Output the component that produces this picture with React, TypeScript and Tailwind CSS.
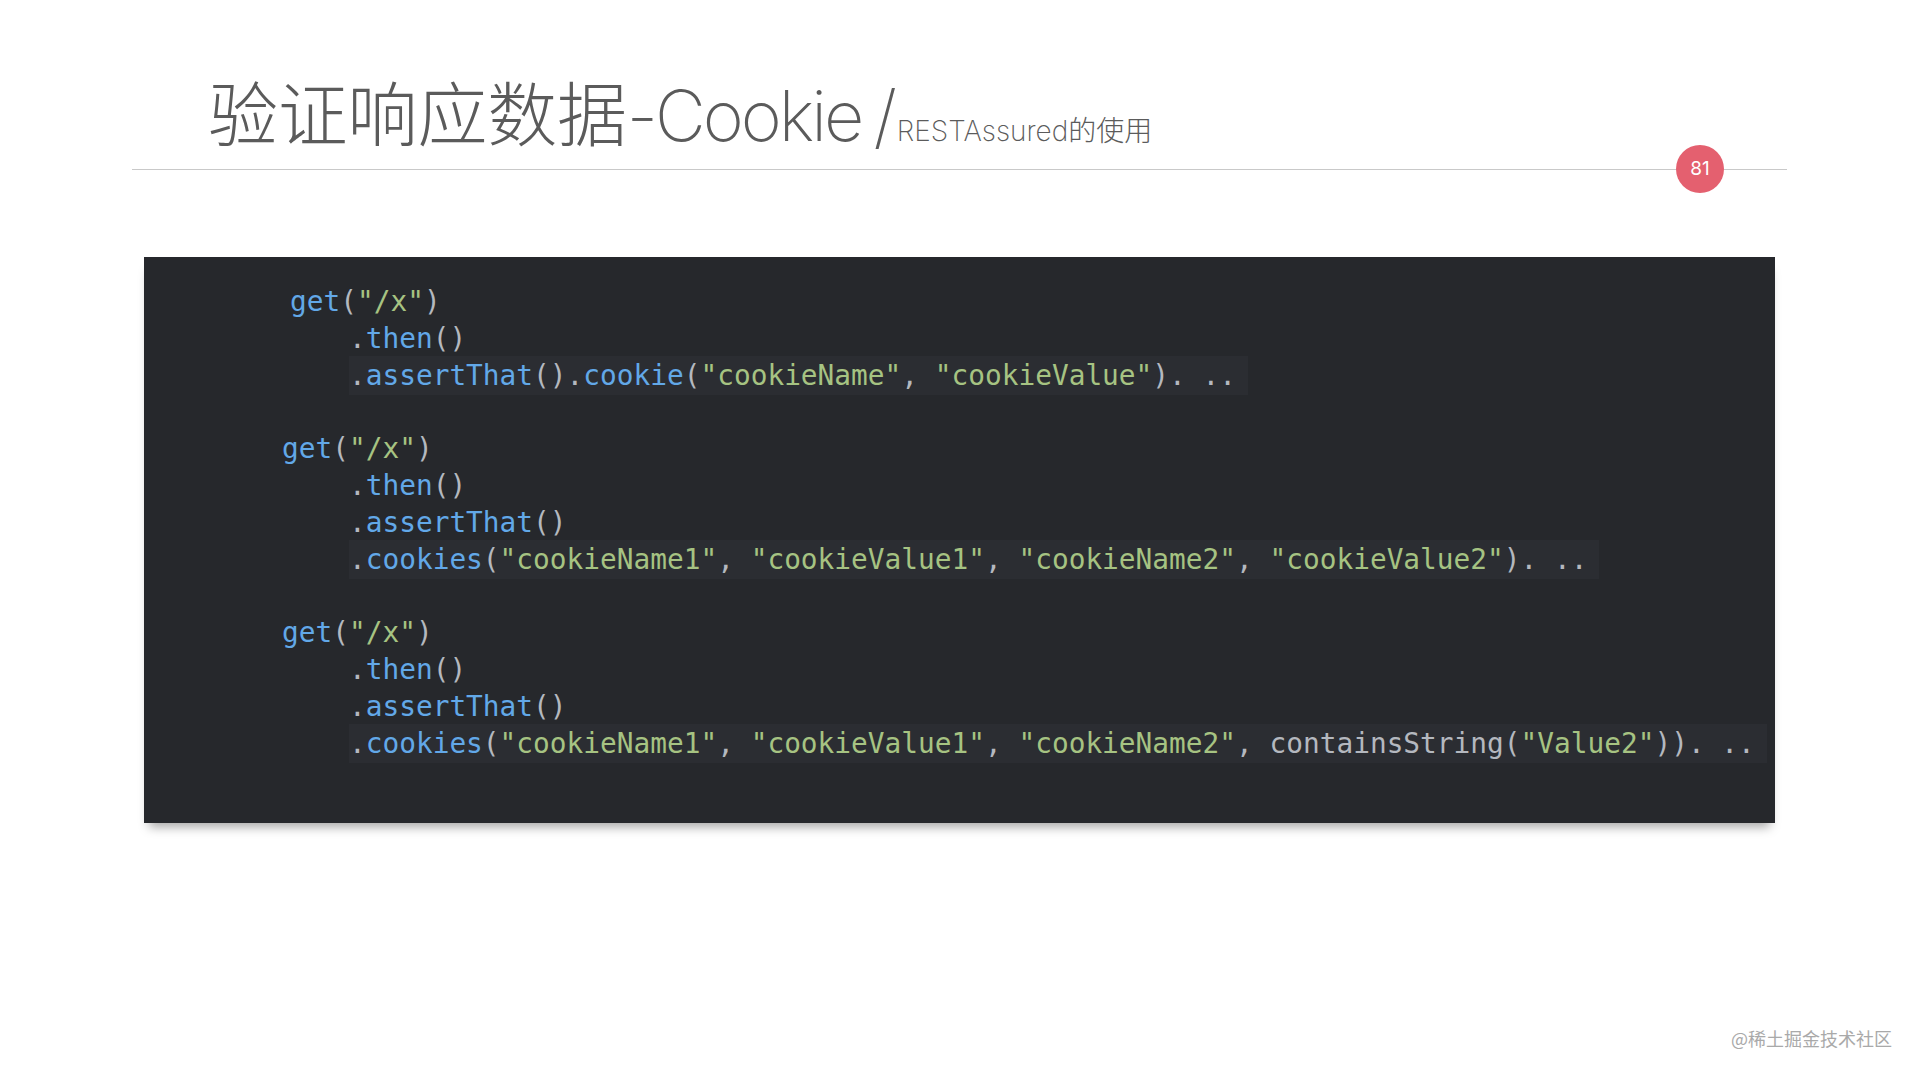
import React from 'react';

const BLUE = new Set(['get', 'then', 'assertThat', 'cookie', 'cookies']);

const lines: string[] = [
  'get("/x")',
  '    .then()',
  '    .assertThat().cookie("cookieName", "cookieValue"). ..',
  '',
  'get("/x")',
  '    .then()',
  '    .assertThat()',
  '    .cookies("cookieName1", "cookieValue1", "cookieName2", "cookieValue2"). ..',
  '',
  'get("/x")',
  '    .then()',
  '    .assertThat()',
  '    .cookies("cookieName1", "cookieValue1", "cookieName2", containsString("Value2")). ..',
];

// lines that sit on a slightly lighter band in the screenshot
const banded = new Set([2, 7, 12]);

function Tokens({ text }: { text: string }) {
  const parts = text.match(/"[^"]*"|[A-Za-z]+|[^"A-Za-z]+/g) || [];
  return (
    <>
      {parts.map((p, i) => {
        let cls = 'text-[#b4b8bf]';
        if (p.startsWith('"')) cls = 'text-[#a6c382]';
        else if (BLUE.has(p)) cls = 'text-[#62a8e8]';
        return (
          <span key={i} className={cls}>
            {p}
          </span>
        );
      })}
    </>
  );
}

function CodeLine({ text, index }: { text: string; index: number }) {
  const indent = text.match(/^ */)?.[0] ?? '';
  const body = text.slice(indent.length);
  return (
    <div className={index === 0 ? 'h-[36.8px] pl-2' : 'h-[36.8px]'}>
      {indent}
      {body && (
        <span className={banded.has(index) ? 'bg-[#2b2d32] pr-3 py-[3px]' : ''}>
          <Tokens text={body} />
        </span>
      )}
    </div>
  );
}

export default function App() {
  return (
    <div className="relative w-full h-[1080px] bg-white overflow-hidden">
      <header className="h-[169px] pl-[208px] pt-[81px] flex items-baseline text-[#5b5b5b] font-['Inter','Noto_Sans_CJK_SC',sans-serif] font-extralight">
        <span className="text-[70px] leading-[70px] tracking-[-0.2px]">验证响应数据</span>
        <span className="text-[70px] leading-[70px] tracking-[-3px]">-Cookie</span>
        <span className="text-[70px] leading-[70px] ml-[12px]">/</span>
        <span className="text-[28px] leading-none">RESTAssured的使用</span>
      </header>

      <div className="relative ml-[132px] w-[1655px] h-px bg-[#c9c9c9]">
        <div className="absolute left-[1544px] -top-[24px] w-[48px] h-[48px] rounded-full bg-[#e4606f] flex items-center justify-center text-white text-[19px] font-['Inter',sans-serif]">
          81
        </div>
      </div>

      <section className="ml-[144px] mt-[87px] w-[1631px] h-[566px] bg-[#26282c] shadow-[0_9px_10px_-5px_rgba(0,0,0,0.35)] pt-[27px] pl-[138px] whitespace-pre font-['DejaVu_Sans_Mono',monospace] text-[27.8px] leading-[36.8px]">
        {lines.map((l, i) => (
          <CodeLine key={i} text={l} index={i} />
        ))}
      </section>

      <div className="absolute right-[28px] bottom-[28px] text-[18px] text-[#a9a9a9] font-['Noto_Sans_CJK_SC',sans-serif]">
        @稀土掘金技术社区
      </div>
    </div>
  );
}
